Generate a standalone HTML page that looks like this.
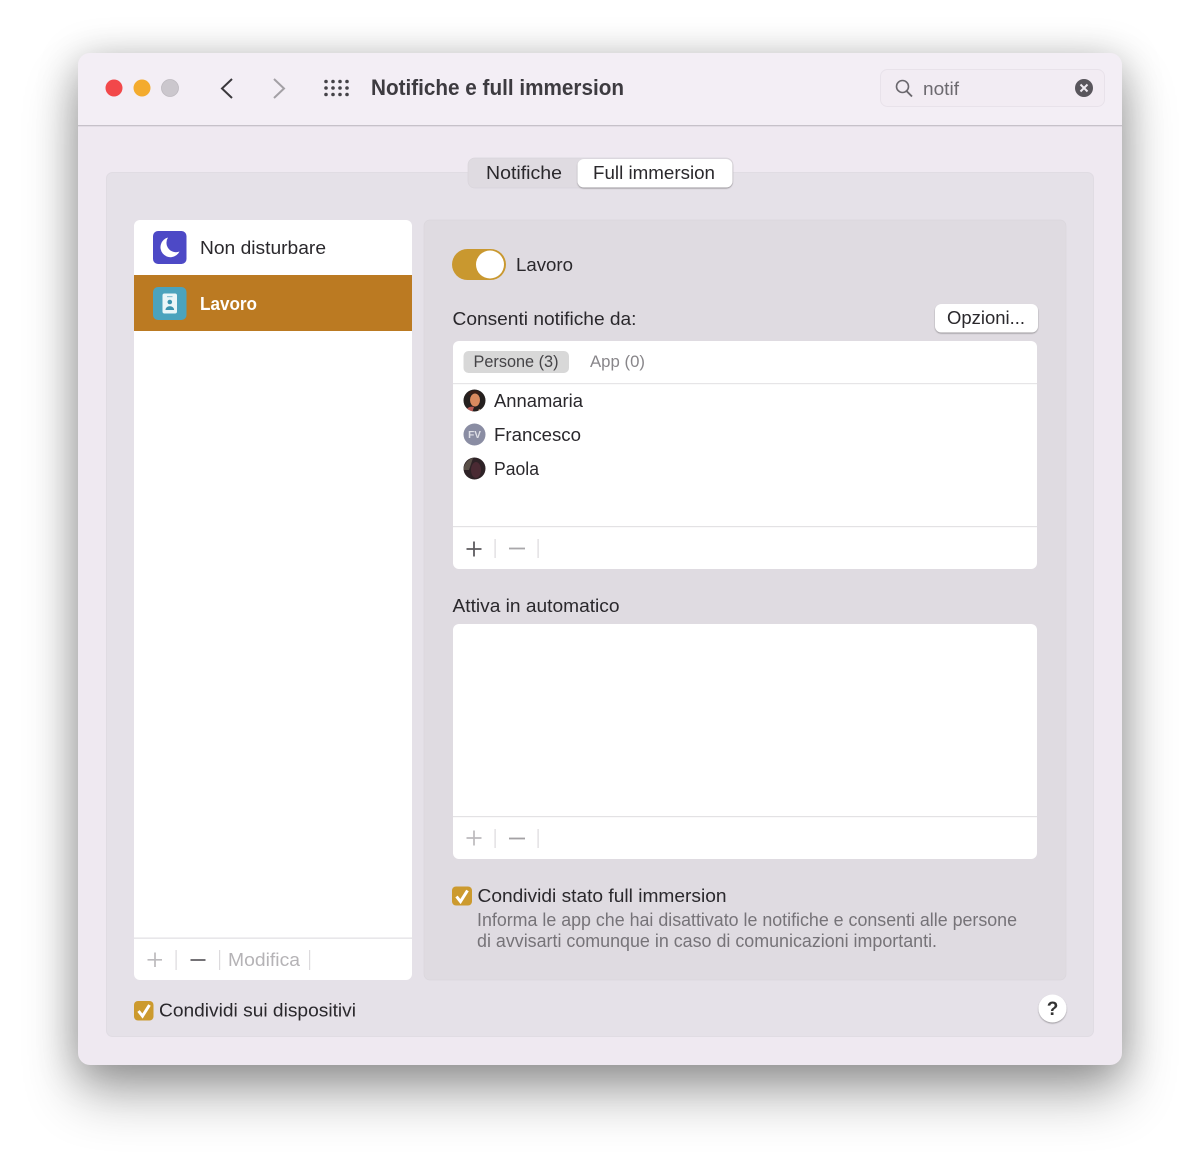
<!DOCTYPE html>
<html><head><meta charset="utf-8">
<style>
html,body{margin:0;padding:0;width:1200px;height:1168px;overflow:hidden;background:#fff}
.win{position:absolute;left:78px;top:53px;width:1044px;height:1012px;border-radius:12px;background:#efe9f1;box-shadow:0 30px 54px rgba(0,0,0,.3),0 6px 40px rgba(0,0,0,.26)}
svg{position:absolute;left:0;top:0;filter:blur(.35px)}
text{font-family:"Liberation Sans",sans-serif;font-size:18.500px;fill:#2a282c}
</style></head>
<body>
<div class="win"></div>
<svg width="1200" height="1168" viewBox="0 0 1200 1168" xmlns="http://www.w3.org/2000/svg">
<defs>
<filter id="s" x="-20%" y="-20%" width="140%" height="150%"><feDropShadow dx="0" dy="1" stdDeviation="0.8" flood-color="#000" flood-opacity=".35"/></filter>
<clipPath id="c1"><circle cx="474.500" cy="400.500" r="11"/></clipPath>
<clipPath id="c3"><circle cx="474.500" cy="468.500" r="11"/></clipPath>
</defs>
<!-- title bar -->
<path d="M78 125V65a12 12 0 0 1 12-12H1110a12 12 0 0 1 12 12V125Z" fill="#f3eef5"/>
<rect x="78" y="125" width="1044" height="1.300" fill="#c6c1c9"/>
<circle cx="114" cy="88" r="8.500" fill="#f2484a"/>
<circle cx="142" cy="88" r="8.500" fill="#f3ab2e"/>
<circle cx="170" cy="88" r="8.500" fill="#cbc7cd" stroke="#bdb9bf" stroke-width=".8"/>
<path d="M232 79L222 88.500L232 98" fill="none" stroke="#3a383c" stroke-width="2"/>
<path d="M274 79L284 88.500L274 98" fill="none" stroke="#a3a0a5" stroke-width="2"/>
<g fill="#454348">
<circle cx="326" cy="81.500" r="1.800"/><circle cx="333" cy="81.500" r="1.800"/><circle cx="340" cy="81.500" r="1.800"/><circle cx="347" cy="81.500" r="1.800"/>
<circle cx="326" cy="88" r="1.800"/><circle cx="333" cy="88" r="1.800"/><circle cx="340" cy="88" r="1.800"/><circle cx="347" cy="88" r="1.800"/>
<circle cx="326" cy="94.500" r="1.800"/><circle cx="333" cy="94.500" r="1.800"/><circle cx="340" cy="94.500" r="1.800"/><circle cx="347" cy="94.500" r="1.800"/>
</g>
<text x="371" y="95" textLength="253" lengthAdjust="spacingAndGlyphs" style="font-size:22px;font-weight:700;fill:#3d3b40">Notifiche e full immersion</text>
<!-- search -->
<rect x="880.500" y="69.500" width="224" height="37" rx="7" fill="#f2ecf3" stroke="#e8e2ea"/>
<circle cx="902.500" cy="86.500" r="6" fill="none" stroke="#6a676d" stroke-width="1.600"/>
<path d="M906.500 91L912 96.500" stroke="#6a676d" stroke-width="1.900"/>
<text x="923" y="95" textLength="36" lengthAdjust="spacingAndGlyphs" style="fill:#6c696f">notif</text>
<circle cx="1084" cy="88" r="9" fill="#59565c"/>
<path d="M1080.500 84.500L1087.500 91.500M1087.500 84.500L1080.500 91.500" stroke="#efeaf1" stroke-width="2"/>
<!-- main panel -->
<rect x="106.500" y="172.500" width="987" height="864" rx="6" fill="#e5e1e8" stroke="#e0dce3"/>
<!-- tabs -->
<rect x="468" y="158" width="265" height="30" rx="7" fill="#dfdbe1" stroke="#d9d5db" stroke-width=".7"/>
<rect x="577.500" y="159" width="155" height="28.500" rx="6.500" fill="#fff" filter="url(#s)"/>
<text x="486" y="179" textLength="76" lengthAdjust="spacingAndGlyphs">Notifiche</text>
<text x="593" y="179" textLength="122" lengthAdjust="spacingAndGlyphs">Full immersion</text>
<!-- sidebar -->
<rect x="134" y="220" width="278" height="760" rx="6" fill="#fff"/>
<rect x="134" y="275" width="278" height="56" fill="#bb7a22"/>
<rect x="153" y="231" width="33.500" height="33" rx="5" fill="#4d49c6"/>
<path d="M168 237.500a10 10 0 1 0 11.500 14a9.500 9.500 0 0 1 -11.500 -14Z" fill="#fff"/>
<rect x="153" y="287" width="33.500" height="33" rx="5" fill="#4ba3bd"/>
<rect x="162.500" y="293.500" width="14.500" height="20" rx="2" fill="#eaf6f8"/>
<rect x="167" y="296" width="5.500" height="1.200" fill="#8cc4d4"/>
<circle cx="169.800" cy="302" r="2.300" fill="#3b93ae"/>
<path d="M165.500 310c0-5 8.600-5 8.600 0Z" fill="#3b93ae"/>
<text x="200" y="254" textLength="126" lengthAdjust="spacingAndGlyphs">Non disturbare</text>
<text x="200" y="310" textLength="57" style="fill:#fff;font-weight:700" lengthAdjust="spacingAndGlyphs">Lavoro</text>
<rect x="134" y="937.500" width="278" height="1.300" fill="#e3e1e4"/>
<path d="M155 952.500V967M147.500 959.800H162" stroke="#bcbabd" stroke-width="1.700"/>
<rect x="175.500" y="950" width="1.200" height="20" fill="#dcdadd"/>
<path d="M190.500 960H205.500" stroke="#747276" stroke-width="2"/>
<rect x="219" y="950" width="1.200" height="20" fill="#dcdadd"/>
<text x="228" y="966" textLength="72" lengthAdjust="spacingAndGlyphs" style="fill:#b5b3b6">Modifica</text>
<rect x="309" y="950" width="1.200" height="20" fill="#dcdadd"/>
<!-- right panel -->
<rect x="424" y="220" width="642" height="760" rx="6" fill="#dfdbe1" stroke="#dad6dc" stroke-width=".7"/>
<rect x="452" y="249" width="54" height="31" rx="15.500" fill="#c9982f"/>
<circle cx="490" cy="264.500" r="14" fill="#fff"/>
<text x="516" y="271" textLength="57" lengthAdjust="spacingAndGlyphs">Lavoro</text>
<text x="452.500" y="325" textLength="184" lengthAdjust="spacingAndGlyphs">Consenti notifiche da:</text>
<rect x="935" y="304" width="103" height="28.500" rx="6.500" fill="#fff" filter="url(#s)"/>
<text x="947" y="324" textLength="78" lengthAdjust="spacingAndGlyphs">Opzioni...</text>
<!-- list 1 -->
<rect x="453" y="341" width="584" height="228" rx="6" fill="#fff"/>
<rect x="463.500" y="351" width="105.500" height="22" rx="5" fill="#d8d8d8"/>
<text x="473.500" y="367" textLength="85" lengthAdjust="spacingAndGlyphs" style="font-size:16.500px;fill:#454447">Persone (3)</text>
<text x="590" y="367" textLength="55" lengthAdjust="spacingAndGlyphs" style="font-size:16.500px;fill:#88868a">App (0)</text>
<rect x="453" y="383" width="584" height="1.200" fill="#e6e5e7"/>
<g clip-path="url(#c1)">
<rect x="463" y="389" width="23" height="23" fill="#25201f"/>
<ellipse cx="475" cy="400" rx="5" ry="6.500" fill="#d98a5f"/>
<path d="M468 395c2-6 11-6 13 0l-3-1c-3-1-6-1-8 1Z" fill="#3a1f18"/>
<path d="M465 412c2-5 6-6 9-5l-2 6Z" fill="#b95a55"/>
<path d="M479 409l6 2v2h-8Z" fill="#c8a080"/>
</g>
<circle cx="474.500" cy="434.500" r="11" fill="#8a8da3"/>
<text x="474.500" y="438" text-anchor="middle" style="font-size:10px;font-weight:700;fill:#dfe0e7">FV</text>
<g clip-path="url(#c3)">
<rect x="463" y="457" width="23" height="23" fill="#2e2226"/>
<ellipse cx="476" cy="470" rx="5" ry="8" fill="#4a2a33"/>
<path d="M463 470c2-8 6-11 10-12l-4 12Z" fill="#5a5048"/>
</g>
<text x="494" y="407" textLength="89" lengthAdjust="spacingAndGlyphs">Annamaria</text>
<text x="494" y="441" textLength="87" lengthAdjust="spacingAndGlyphs">Francesco</text>
<text x="494" y="475" textLength="45" lengthAdjust="spacingAndGlyphs">Paola</text>
<rect x="453" y="526" width="584" height="1.200" fill="#e3e2e4"/>
<path d="M474 541.500V556.500M466.500 549H481.500" stroke="#5d5b5f" stroke-width="1.800"/>
<rect x="494.500" y="539" width="1.200" height="19" fill="#dcdadd"/>
<path d="M509 548.500H525" stroke="#a9a7aa" stroke-width="1.800"/>
<rect x="537.500" y="539" width="1.200" height="19" fill="#dcdadd"/>
<!-- list 2 -->
<text x="452.500" y="612" textLength="167" lengthAdjust="spacingAndGlyphs">Attiva in automatico</text>
<rect x="453" y="624" width="584" height="235" rx="6" fill="#fff"/>
<rect x="453" y="816" width="584" height="1.200" fill="#e3e2e4"/>
<path d="M474 830.500V845.500M466.500 838H481.500" stroke="#bcbabd" stroke-width="1.700"/>
<rect x="494.500" y="829" width="1.200" height="19" fill="#dcdadd"/>
<path d="M509 838.500H525" stroke="#a3a1a4" stroke-width="1.800"/>
<rect x="537.500" y="829" width="1.200" height="19" fill="#dcdadd"/>
<!-- checkbox 1 -->
<rect x="452" y="886.500" width="20" height="19" rx="4" fill="#cc9a2e"/>
<path d="M456.500 896.500L460.500 901.500L467.500 890.500" fill="none" stroke="#fff" stroke-width="3"/>
<text x="477.500" y="902" textLength="249" lengthAdjust="spacingAndGlyphs">Condividi stato full immersion</text>
<text x="477" y="926" textLength="540" lengthAdjust="spacingAndGlyphs" style="fill:#767378;font-size:18px">Informa le app che hai disattivato le notifiche e consenti alle persone</text>
<text x="477" y="947" textLength="460" lengthAdjust="spacingAndGlyphs" style="fill:#767378;font-size:18px">di avvisarti comunque in caso di comunicazioni importanti.</text>
<!-- checkbox 2 -->
<rect x="134" y="1001" width="19.500" height="19.500" rx="4" fill="#cc9a2e"/>
<path d="M138.500 1011L142.500 1016L149.500 1005" fill="none" stroke="#fff" stroke-width="3"/>
<text x="159" y="1016.500" textLength="197" lengthAdjust="spacingAndGlyphs">Condividi sui dispositivi</text>
<!-- help -->
<circle cx="1052.500" cy="1008.500" r="14" fill="#fff" filter="url(#s)"/>
<text x="1052.500" y="1015" text-anchor="middle" style="font-size:19px;font-weight:700;fill:#333">?</text>
</svg>
</body></html>
